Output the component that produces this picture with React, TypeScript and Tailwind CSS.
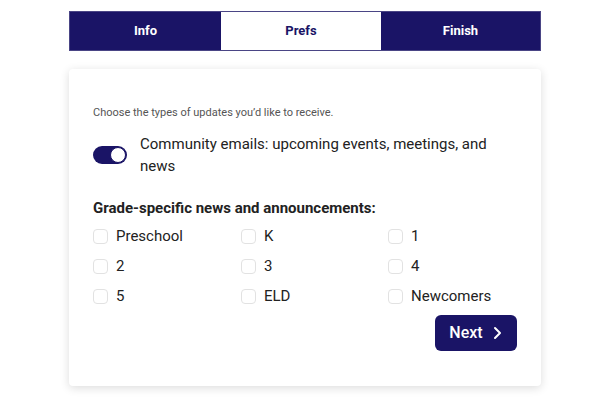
import React from "react";

const grades = ["Preschool", "K", "1", "2", "3", "4", "5", "ELD", "Newcomers"];

export default function App() {
  return (
    <div className="w-[600px] h-[400px] bg-white overflow-hidden" style={{ fontFamily: "Roboto, 'Liberation Sans', sans-serif" }}>
      <div className="ml-[69px] w-[472px] pt-[11px]">
        <div className="flex h-[40px] border border-[#4a4585] text-[13px] font-bold">
          <div className="w-[151px] flex items-center justify-center bg-[#1a1466] text-white">Info</div>
          <div className="w-[160px] flex items-center justify-center bg-white text-[#1a1466]">Prefs</div>
          <div className="flex-1 flex items-center justify-center bg-[#1a1466] text-white">Finish</div>
        </div>
        <div className="mt-[18px] h-[317px] rounded-[4px] bg-white shadow-[0_2px_10px_rgba(0,0,0,0.14)] px-[24px] pt-[37px]">
          <p className="text-[11px] leading-[14px] text-[#555]">Choose the types of updates you’d like to receive.</p>
          <div className="mt-[13px] flex items-center gap-[13px]">
            <div className="w-[34px] h-[18px] rounded-full bg-[#1a1466] flex items-center justify-end pr-[1px] shrink-0">
              <div className="w-[16px] h-[16px] rounded-full bg-white border-[1.5px] border-[#1a1466]"></div>
            </div>
            <p className="text-[15px] leading-[22px] text-[#222]">Community emails: upcoming events, meetings, and news</p>
          </div>
          <h3 className="mt-[21px] text-[15px] leading-[20px] font-bold text-[#222]">Grade-specific news and announcements:</h3>
          <div className="mt-[3px] grid grid-cols-[148px_147px_1fr]">
            {grades.map((g) => (
              <label key={g} className="flex items-center h-[30px] gap-[8px]">
                <span className="w-[15px] h-[15px] rounded-[4px] border border-[#e2e2e2] bg-white shrink-0"></span>
                <span className="text-[15px] text-[#222]">{g}</span>
              </label>
            ))}
          </div>
          <div className="flex justify-end mt-[4px]">
            <button className="w-[82px] h-[36px] rounded-[6px] bg-[#1a1466] text-white text-[16px] font-medium flex items-center justify-center gap-[8px]">
              Next
              <svg width="12" height="14" viewBox="0 0 12 14" fill="none" stroke="white" strokeWidth="2" strokeLinecap="round" strokeLinejoin="round">
                <path d="M4 2l5 5-5 5" />
              </svg>
            </button>
          </div>
        </div>
      </div>
    </div>
  );
}
